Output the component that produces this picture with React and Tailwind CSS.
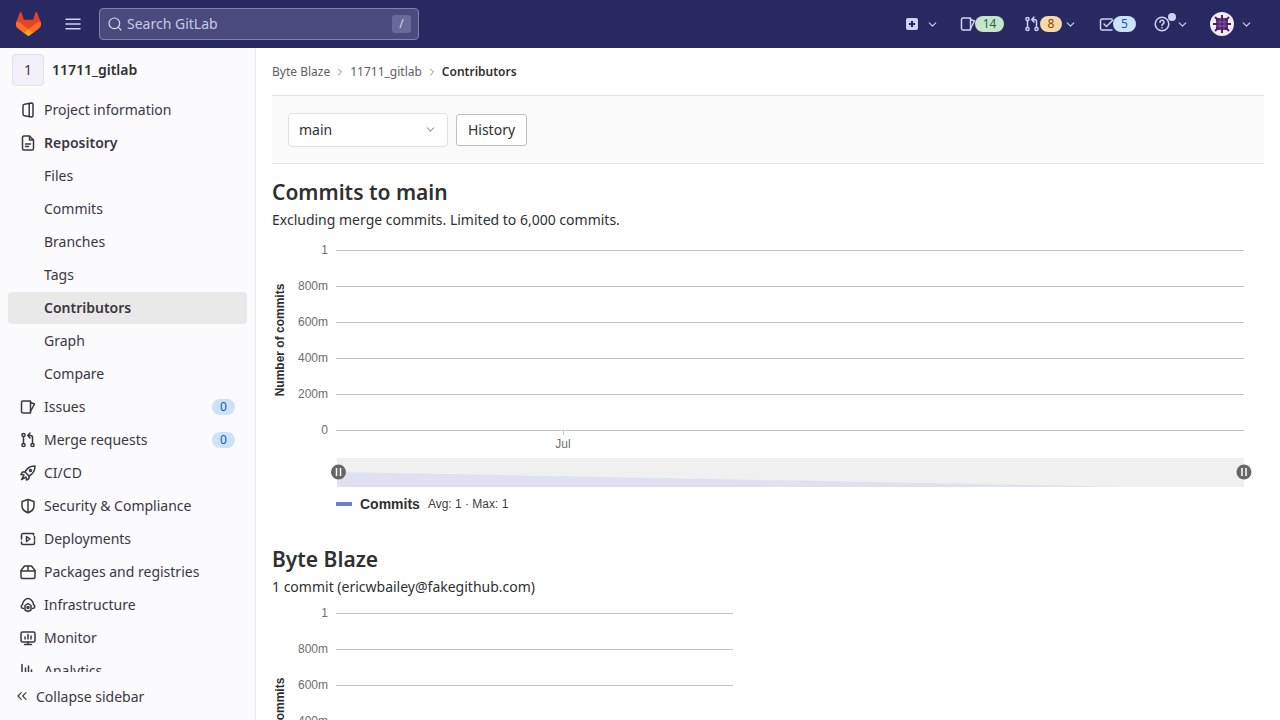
import React from "react";
import { ChevronDown, ChevronRight, ChevronsLeft, Search } from "lucide-react";

const Glyph = ({ children, className = "text-[#3a383f]", size = 16 }) => (
  <svg
    width={size}
    height={size}
    viewBox="0 0 16 16"
    fill="none"
    stroke="currentColor"
    strokeWidth="1.5"
    strokeLinecap="round"
    strokeLinejoin="round"
    className={`shrink-0 ${className}`}
  >
    {children}
  </svg>
);

const IssuesGlyph = () => (
  <>
    <path d="M3 2h7.5v12H3a1.5 1.5 0 0 1-1.5-1.5v-9A1.5 1.5 0 0 1 3 2Z" />
    <path d="M10.5 3.5 14.5 5l-4 7.5" />
  </>
);

const MergeGlyph = () => (
  <>
    <circle cx="3.5" cy="3" r="1.6" />
    <circle cx="3.5" cy="13" r="1.6" />
    <circle cx="12.5" cy="13" r="1.6" />
    <path d="M3.5 4.6v6.8M12.5 11.4V5.5a2 2 0 0 0-2-2H8.5M10 1 7.8 3.5 10 6" />
  </>
);

const icons = {
  project: (
    <>
      <path d="M4.500 2.200 11.500 1a1.500 1.500 0 0 1 1.500 1.500v11a1.500 1.500 0 0 1-1.500 1.500l-7-1.200A1.800 1.800 0 0 1 3 12V4a1.800 1.800 0 0 1 1.500-1.800Z" />
      <path d="M9.200 1.500v13" />
    </>
  ),
  repo: (
    <>
      <path d="M9.5 1H4a1.5 1.5 0 0 0-1.5 1.5v11A1.5 1.5 0 0 0 4 15h8a1.5 1.5 0 0 0 1.5-1.5V5L9.5 1Z" />
      <path d="M9.5 1.5V5H13M5.5 9h5M5.5 11.5h3" />
    </>
  ),
  issues: <IssuesGlyph />,
  merge: <MergeGlyph />,
  rocket: (
    <>
      <path d="M15 1c-4.5 0-8 2-10 6l4 4c4-2 6-5.500 6-10Z" />
      <path d="M5 7H2.500L1 9.500l3 .5M9 11v2.500L6.500 15 6 12" />
      <path d="M3.500 11 1.500 14.500 5 12.500" />
      <circle cx="10.500" cy="5.500" r="1" />
    </>
  ),
  shield: (
    <>
      <path d="M8 1.500 14 3.500V8c0 3-2.500 5.500-6 6.800C4.500 13.500 2 11 2 8V3.500l6-2Z" />
      <path d="M8 2v12" />
    </>
  ),
  deploy: (
    <>
      <path d="M1.500 5.500V4A1.500 1.500 0 0 1 3 2.500h10.500V4M14.500 10.500V12a1.500 1.500 0 0 1-1.500 1.500H3A1.500 1.500 0 0 1 1.500 12v-1" />
      <path d="M1.500 5.500v2.500M14.500 5.500V9" />
      <path d="M6.500 5.500 10 8l-3.500 2.500v-5Z" />
    </>
  ),
  box: (
    <>
      <path d="M4.500 2h7L15 6.500V13a1.500 1.500 0 0 1-1.500 1.500h-11A1.500 1.500 0 0 1 1 13V6.500L4.500 2Z" />
      <path d="M1 7h14M8 2v5" />
    </>
  ),
  cloud: (
    <>
      <path d="M3.500 11.500C1 11.500 .5 8.500 2.500 7.500 2.500 4 6 1.500 8 1.500s5.500 2.500 5.500 6c2 1 1.500 4-1 4" />
      <path d="M5 8.500 8 6.500l3 2v4.500l-3 1.500-3-1.500V8.500Z" />
      <circle cx="8" cy="10.500" r="1" />
    </>
  ),
  monitor: (
    <>
      <rect x="1" y="2" width="14" height="10" rx="1.500" />
      <path d="M8 12v2.500M4.500 14.500h7M5 9V7M8 9V4.500M11 9V6" />
    </>
  ),
  chart: <path d="M2 1.500v12.500h12M5.500 5v6M8.500 3v8M11.500 7v4" />,
};

const nav = [
  { label: "Project information", icon: "project" },
  { label: "Repository", icon: "repo", bold: true },
  { label: "Files" },
  { label: "Commits" },
  { label: "Branches" },
  { label: "Tags" },
  { label: "Contributors", active: true },
  { label: "Graph" },
  { label: "Compare" },
  { label: "Issues", icon: "issues", count: 0 },
  { label: "Merge requests", icon: "merge", count: 0 },
  { label: "CI/CD", icon: "rocket" },
  { label: "Security & Compliance", icon: "shield" },
  { label: "Deployments", icon: "deploy" },
  { label: "Packages and registries", icon: "box" },
  { label: "Infrastructure", icon: "cloud" },
  { label: "Monitor", icon: "monitor" },
  { label: "Analytics", icon: "chart" },
];

const NavItem = ({ item }) => (
  <a
    className={`mx-2 mb-px flex h-8 w-[239px] shrink-0 items-center rounded-[4px] pr-3 text-[#3a383f] ${
      item.active ? "bg-[#e9e9e9] font-semibold" : ""
    } ${item.bold ? "font-semibold" : ""} ${item.icon ? "pl-3" : "pl-9"}`}
  >
    {item.icon && (
      <span className="mr-2 flex w-4 justify-center">
        <Glyph>{icons[item.icon]}</Glyph>
      </span>
    )}
    <span className="flex-1 whitespace-nowrap">{item.label}</span>
    {item.count !== undefined && (
      <span className="flex h-4 w-[23px] items-center justify-center rounded-full bg-[#cbe2f9] text-xs text-[#0b5cad]">
        {item.count}
      </span>
    )}
  </a>
);

const Sidebar = () => (
  <aside className="flex h-full w-[256px] shrink-0 flex-col border-r border-[#e9e9e9] bg-[#fbfafd]">
    <div className="flex h-[46px] shrink-0 items-start pl-3 pt-[6px]">
      <div className="flex h-8 w-8 items-center justify-center rounded-[4px] border border-[#e3e0ea] bg-[#f3f0fa] text-sm text-[#3a383f]">
        1
      </div>
      <span className="ml-2 mt-[6px] font-semibold text-[#303030]">11711_gitlab</span>
    </div>
    <nav className="flex min-h-0 flex-1 flex-col overflow-hidden">
      {nav.map((item) => (
        <NavItem key={item.label} item={item} />
      ))}
    </nav>
    <div className="flex h-12 shrink-0 items-center bg-[#fbfafd] pl-[14px] pt-[2px] text-[#3a383f]">
      <ChevronsLeft size={16} strokeWidth={1.7} className="-mt-[3px]" />
      <span className="ml-[6px]">Collapse sidebar</span>
    </div>
  </aside>
);

const Badge = ({ children, className }) => (
  <span className={`flex h-4 items-center justify-center rounded-full text-xs ${className}`}>
    {children}
  </span>
);

const Caret = ({ className = "ml-[6px]" }) => (
  <ChevronDown size={13} strokeWidth={2} className={`text-[#d1d0f0] ${className}`} />
);

const Topbar = () => (
  <header className="flex h-12 shrink-0 items-center bg-[#292961]">
    <svg width="25" height="24" viewBox="0 0 25 24" className="ml-4 shrink-0">
      <path d="m24.507 9.5-.034-.09L21.082.562a.896.896 0 0 0-1.694.091l-2.29 7.01H7.825L5.535.653a.898.898 0 0 0-1.694-.09L.451 9.411.416 9.5a6.297 6.297 0 0 0 2.09 7.278l.012.01.03.022 5.16 3.867 2.56 1.935 1.554 1.176a1.051 1.051 0 0 0 1.268 0l1.555-1.176 2.56-1.935 5.197-3.89.014-.01A6.297 6.297 0 0 0 24.507 9.5Z" fill="#E24329" />
      <path d="m24.507 9.5-.034-.09a11.44 11.44 0 0 0-4.56 2.051l-7.447 5.632 4.742 3.584 5.197-3.89.014-.01A6.297 6.297 0 0 0 24.507 9.5Z" fill="#FC6D26" />
      <path d="m7.707 20.677 2.56 1.935 1.555 1.176a1.051 1.051 0 0 0 1.268 0l1.555-1.176 2.56-1.935-4.743-3.584-4.755 3.584Z" fill="#FCA326" />
      <path d="M5.01 11.461a11.43 11.43 0 0 0-4.56-2.05L.416 9.5a6.297 6.297 0 0 0 2.09 7.278l.012.01.03.022 5.16 3.867 4.745-3.584-7.444-5.632Z" fill="#FC6D26" />
    </svg>
    <svg width="16" height="16" viewBox="0 0 16 16" className="ml-[24px] shrink-0 text-[#d1d0f0]" stroke="currentColor" strokeWidth="1.5" strokeLinecap="round">
      <path d="M1 3.250h14M1 8h14M1 12.750h14" />
    </svg>
    <div className="ml-[18px] flex h-8 w-[320px] items-center rounded-[4px] border border-[#8080b8] bg-[#4a4a7d] pl-[7px] pr-[7px] text-[#c9c9e4]">
      <Search size={16} strokeWidth={1.8} className="text-[#d8d8ee]" />
      <span className="ml-[4px] flex-1">Search GitLab</span>
      <span className="flex h-[18px] w-[19px] items-center justify-center rounded-[3px] bg-[#6a6a98] text-xs text-[#d8d8ee]">/</span>
    </div>
    <div className="ml-auto mr-[27px] flex items-center text-[#d1d0f0]">
      <svg width="16" height="16" viewBox="0 0 16 16" className="shrink-0">
        <rect x="2" y="2" width="12" height="12" rx="2" fill="#d1d0f0" />
        <path d="M8 5v6M5 8h6" stroke="#292961" strokeWidth="2" />
      </svg>
      <Caret />
      <span className="ml-[21px] flex items-center">
        <Glyph className="text-[#d1d0f0]"><IssuesGlyph /></Glyph>
        <Badge className="-ml-px w-[29px] bg-[#c3e6cd] text-[#24663b]">14</Badge>
      </span>
      <span className="ml-[20px] flex items-center">
        <Glyph className="text-[#d1d0f0]"><MergeGlyph /></Glyph>
        <Badge className="w-[22px] bg-[#f5d9a8] text-[#8f4700]">8</Badge>
        <Caret className="ml-[2px]" />
      </span>
      <span className="ml-[22px] flex items-center">
        <Glyph className="text-[#d1d0f0]">
          <path d="M13 3H3a1.500 1.500 0 0 0-1.500 1.500v8A1.500 1.500 0 0 0 3 14h10" />
          <path d="m5 8 2.500 2.500L14 4" />
        </Glyph>
        <Badge className="-ml-[2px] w-[23px] bg-[#cbe2f9] text-[#0b5cad]">5</Badge>
      </span>
      <span className="relative ml-[18px] flex items-center">
        <Glyph className="text-[#d1d0f0]">
          <circle cx="8" cy="8" r="6.800" />
          <path d="M6 6.300a2 2 0 1 1 3 1.700c-.7.400-1 .8-1 1.500" />
          <path d="M8 11.800v.1" />
        </Glyph>
        <span className="absolute left-[14px] top-[-3px] h-2 w-2 rounded-full bg-[#d1d0f0]" />
        <Caret />
      </span>
      <svg width="24" height="24" viewBox="0 0 24 24" className="ml-[21px] shrink-0">
        <circle cx="12" cy="12" r="12" fill="#f2edf5" />
        <rect x="6" y="6" width="12" height="12" rx="1" fill="#4f1d69" />
        <path d="M10 6v12M14 6v12M6 10h12M6 14h12" stroke="#8a5aa3" strokeWidth="1" />
        <path d="M3 12h3M18 12h3M12 3v3M12 18v3M5 5l2 2M17 17l2 2M19 5l-2 2M5 19l2-2" stroke="#4f1d69" strokeWidth="2" />
      </svg>
      <Caret />
    </div>
  </header>
);

const axisLabels = ["1", "800m", "600m", "400m", "200m", "0"];

// width/height in px, origin is the left edge of the content column
const ChartGrid = ({ right, top }) =>
  axisLabels.map((label, i) => (
    <g key={label}>
      <line x1="64" x2={right} y1={top + i * 36 + 0.5} y2={top + i * 36 + 0.5} stroke="#c4c4c4" />
      <text x="56" y={top + i * 36 + 4} textAnchor="end" fontSize="12" fill="#6e6e6e">
        {label}
      </text>
    </g>
  ));

const Handle = ({ x }) => (
  <g>
    <circle cx={x} cy="232" r="7.500" fill="#666666" />
    <path d={`M${x - 2} 228v8M${x + 2} 228v8`} stroke="#ffffff" strokeWidth="1.500" />
  </g>
);

const OverviewChart = () => (
  <svg width="992" height="248" className="block font-['Liberation_Sans',sans-serif]">
    <ChartGrid right={972} top={10} />
    <text
      transform="translate(12 100) rotate(-90)"
      textAnchor="middle"
      fontSize="12"
      fontWeight="700"
      fill="#303030"
    >
      Number of commits
    </text>
    <path d="M291.500 191v4" stroke="#c4c4c4" />
    <text x="291" y="208" textAnchor="middle" fontSize="12" fill="#6e6e6e">Jul</text>
    <rect x="65" y="218" width="907" height="29" fill="#f0f0f0" />
    <path d="M65 232 860 247H65Z" fill="#dfe1f0" />
    <Handle x={66.500} />
    <Handle x={972} />
  </svg>
);

const ContributorChart = () => (
  <svg width="992" height="300" className="block font-['Liberation_Sans',sans-serif]">
    <ChartGrid right={461} top={10} />
    <text
      transform="translate(12 131) rotate(-90)"
      textAnchor="middle"
      fontSize="12"
      fontWeight="700"
      fill="#303030"
    >
      Number of commits
    </text>
  </svg>
);

const Main = () => (
  <main className="h-full min-w-0 flex-1 overflow-hidden bg-white px-4 text-[#303030]">
    <div className="flex h-12 items-center border-b border-[#e5e5e5] text-xs text-[#5e5e5e]">
      <span>Byte Blaze</span>
      <ChevronRight size={12} className="mx-[4px] text-[#8a8a8a]" />
      <span>11711_gitlab</span>
      <ChevronRight size={12} className="mx-[4px] text-[#8a8a8a]" />
      <span className="font-semibold text-[#303030]">Contributors</span>
    </div>
    <div className="flex h-[68px] items-center gap-2 border-b border-[#e5e5e5] bg-[#fafafa] px-4">
      <div className="flex h-[34px] w-40 items-center justify-between rounded-[4px] border border-[#e0e0e0] bg-white pl-[10px] pr-[10px]">
        <span>main</span>
        <ChevronDown size={13} className="text-[#a0a0a0]" />
      </div>
      <button className="flex h-8 w-[71px] items-center justify-center rounded-[3px] border border-[#bfbfbf] bg-white">
        History
      </button>
    </div>
    <h2 className="mt-[12px] text-[21px] font-semibold leading-[32px]">Commits to main</h2>
    <p className="mt-[2px] text-sm leading-[20px]">Excluding merge commits. Limited to 6,000 commits.</p>
    <div className="mt-[10px]">
      <OverviewChart />
    </div>
    <div className="mt-[6px] flex h-[20px] items-center pl-16 font-['Liberation_Sans',sans-serif]">
      <span className="h-1 w-4 bg-[#6b7fd1]" />
      <span className="ml-2 text-sm font-bold">Commits</span>
      <span className="ml-2 text-xs text-[#404040]">Avg: 1 · Max: 1</span>
    </div>
    <h2 className="mt-[29px] text-[21px] font-semibold leading-[32px]">Byte Blaze</h2>
    <p className="mt-[2px] text-sm leading-[20px]">1 commit (ericwbailey@fakegithub.com)</p>
    <div className="mt-[6px]">
      <ContributorChart />
    </div>
  </main>
);

export default function App() {
  return (
    <div className="flex h-screen w-full flex-col overflow-hidden bg-white font-['Noto_Sans',sans-serif] text-sm">
      <Topbar />
      <div className="flex min-h-0 flex-1">
        <Sidebar />
        <Main />
      </div>
    </div>
  );
}
